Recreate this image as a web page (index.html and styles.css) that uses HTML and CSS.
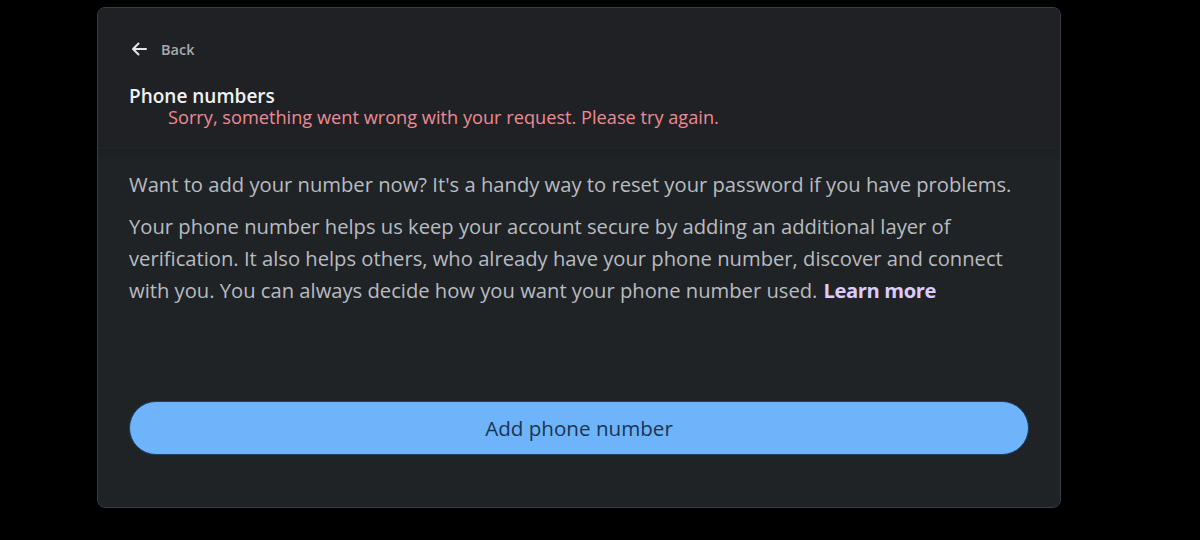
FILE: index.html
```html
<!DOCTYPE html>
<html lang="en">
<head>
<meta charset="utf-8">
<title>Phone numbers</title>
<link rel="stylesheet" href="styles.css">
</head>
<body>
  <div class="dialog">
    <header class="dialog-head">
      <a class="back" href="#">
        <svg class="back-icon" viewBox="0 0 20 20" width="20" height="20" aria-hidden="true">
          <path d="M17 10H4M9.5 4.5L4 10l5.5 5.5" fill="none" stroke="currentColor" stroke-width="2" stroke-linecap="round" stroke-linejoin="round"/>
        </svg>
        <span>Back</span>
      </a>
      <h1 class="title">Phone numbers</h1>
      <p class="error">Sorry, something went wrong with your request. Please try again.</p>
    </header>
    <section class="dialog-body">
      <p class="lead">Want to add your number now? It's a handy way to reset your password if you have problems.</p>
      <p class="info">Your phone number helps us keep your account secure by adding an additional layer of verification. It also helps others, who already have your phone number, discover and connect with you. You can always decide how you want your phone number used.<a class="learn" href="#">Learn more</a></p>
      <button class="primary" type="button">Add phone number</button>
    </section>
  </div>
</body>
</html>
```
FILE: styles.css
```css
html, body {
  margin: 0;
  background: #000;
}

body {
  font-family: "Open Sans", "Noto Sans", sans-serif;
  color: #b8bcc1;
  padding: 7px 0 0 97px;
}

.dialog {
  width: 964px;
  height: 501px;
  box-sizing: border-box;
  background: #202326;
  border: 1px solid #3a3d41;
  border-radius: 8px;
  display: flex;
  flex-direction: column;
  overflow: hidden;
}

.dialog-head {
  height: 140px;
  flex-shrink: 0;
  box-sizing: border-box;
  padding: 29px 31px 0 31px;
  background: #1f2124;
  box-shadow: 0 1px 0 #232629, 0 4px 6px rgba(0, 0, 0, 0.12);
  position: relative;
  z-index: 1;
}

.back {
  display: inline-flex;
  align-items: center;
  gap: 12px;
  color: #a7abb0;
  text-decoration: none;
  font-size: 14.5px;
  font-weight: 600;
  height: 24px;
}

.back-icon {
  color: #e3e5e8;
  width: 20px;
  height: 20px;
}

.title {
  margin: 22px 0 0;
  font-size: 19px;
  font-weight: 600;
  line-height: 20px;
  color: #f1f2f4;
}

.error {
  margin: 1px 0 0 39px;
  font-size: 18.2px;
  line-height: 20px;
  font-weight: 500;
  color: #ee8a94;
}

.dialog-body {
  flex: 1;
  padding: 20px 31px 0 31px;
  background: #202326;
}

.lead,
.info {
  margin: 0;
  font-size: 20.2px;
  line-height: 32px;
}

.lead {
  margin-bottom: 10px;
  white-space: nowrap;
}

.info {
  width: 880px;
}

.learn {
  display: inline-block;
  margin-left: 6px;
  color: #dccbff;
  font-weight: 700;
  letter-spacing: -0.4px;
  text-decoration: none;
}

.primary {
  display: block;
  box-sizing: border-box;
  width: 100%;
  height: 54px;
  margin-top: 95px;
  border: 1px solid #1c4066;
  border-radius: 27px;
  background: #6db4fb;
  color: #1a3552;
  font-family: inherit;
  font-size: 20.6px;
  font-weight: 500;
  cursor: pointer;
}
```
